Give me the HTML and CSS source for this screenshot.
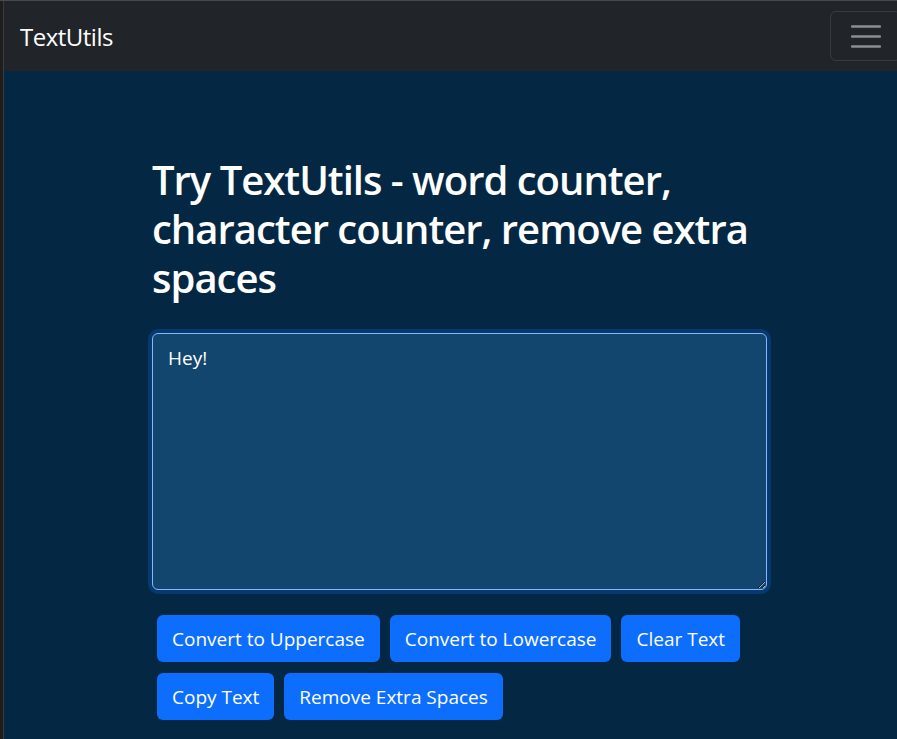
FILE: index.html
```html
<!DOCTYPE html>
<html lang="en">
<head>
<meta charset="utf-8">
<title>TextUtils</title>
<link rel="stylesheet" href="styles.css">
</head>
<body>
<div class="frame">
  <div class="edge"></div>
  <div class="app">
    <nav class="navbar">
      <span class="brand">TextUtils</span>
      <button class="toggler" aria-label="Toggle navigation">
        <svg width="30" height="30" viewBox="0 0 30 30"><path d="M1 5.5h28M1 15.5h28M1 25.5h28" stroke="#8c8e91" stroke-width="2.5" stroke-linecap="round"/></svg>
      </button>
    </nav>
    <main class="container">
      <h1 class="title">Try TextUtils - word counter, character counter, remove extra spaces</h1>
      <div class="field">
        <textarea class="box" autofocus>Hey!</textarea>
      </div>
      <div class="actions">
        <button class="btn">Convert to Uppercase</button>
        <button class="btn">Convert to Lowercase</button>
        <button class="btn">Clear Text</button>
        <button class="btn">Copy Text</button>
        <button class="btn">Remove Extra Spaces</button>
      </div>
    </main>
  </div>
</div>
</body>
</html>
```
FILE: styles.css
```css
html, body {
  margin: 0;
  padding: 0;
  height: 100%;
  overflow: hidden;
}
body {
  background: #1e1e1e;
  font-family: "Open Sans", "Noto Sans", sans-serif;
  color: #fff;
}
.frame {
  display: flex;
  border-top: 1px solid #4a4a4a;
  min-height: 738px;
}
.edge {
  width: 3px;
  background: #1e1e1e;
  border-right: 1px solid #3b3b3b;
}
.app {
  flex: 1;
  background: #042743;
  min-width: 0;
}
.navbar {
  height: 70px;
  background: #212529;
  display: flex;
  align-items: center;
  justify-content: space-between;
  padding-left: 16px;
}
.brand {
  font-size: 24px;
  color: #fff;
  letter-spacing: -0.5px;
  margin-top: 0;
}
.toggler {
  width: 71px;
  height: 50px;
  margin-right: -4px;
  margin-top: -1px;
  background: transparent;
  border: 1px solid rgba(255,255,255,0.1);
  border-radius: 6px;
  display: flex;
  align-items: center;
  justify-content: center;
  padding: 0;
}
.container {
  width: 615px;
  margin-left: 148px;
  padding-top: 84px;
}
.title {
  margin: 0;
  font-size: 40px;
  font-weight: 600;
  line-height: 49px;
  letter-spacing: -1px;
}
.field {
  margin-top: 31px;
}
.box {
  display: block;
  box-sizing: border-box;
  width: 615px;
  height: 257px;
  margin: 0;
  background: #13466e;
  color: #fff;
  border: 1px solid #86b7fe;
  border-radius: 6px;
  box-shadow: 0 0 0 4px #06396f;
  padding: 9px 15px;
  font-family: "Open Sans", "Noto Sans", sans-serif;
  font-size: 19px;
  line-height: 30px;
  outline: none;
  resize: vertical;
  caret-color: #fff;
}
.actions {
  display: flex;
  flex-wrap: wrap;
  gap: 11px 10px;
  margin-top: 25px;
  padding-left: 5px;
  width: 610px;
}
.btn {
  height: 47px;
  padding: 0 15px;
  background: #0d6efd;
  color: #fff;
  border: none;
  border-radius: 6px;
  font-family: "Open Sans", "Noto Sans", sans-serif;
  font-size: 19px;
}
```
